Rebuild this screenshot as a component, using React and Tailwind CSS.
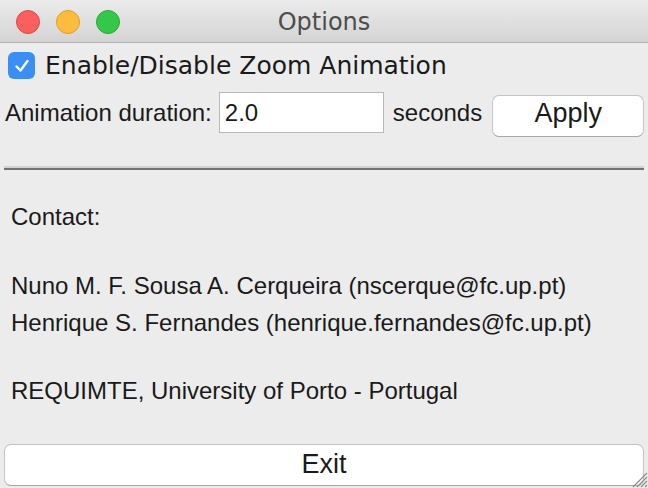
import React from "react";

export default function App() {
  const sans = { fontFamily: '"Liberation Sans", Arial, sans-serif' };
  return (
    <div className="relative flex h-[488px] w-[648px] flex-col overflow-hidden bg-[#ececec] text-[#1a1a1a]" style={sans}>
      {/* Title bar */}
      <div className="grid h-[43px] shrink-0 grid-cols-[1fr_auto_1fr] items-center border-b border-[#b3b3b3] bg-gradient-to-b from-[#ebebeb] to-[#d4d4d4] pt-[2px]">
        <div className="flex items-center gap-[16px] pl-[16px]">
          <span className="h-[24px] w-[24px] rounded-full border border-[#e2463f] bg-[#fc605c]" />
          <span className="h-[24px] w-[24px] rounded-full border border-[#e1a116] bg-[#fdbc40]" />
          <span className="h-[24px] w-[24px] rounded-full border border-[#2aa831] bg-[#34c84a]" />
        </div>
        <div className="text-[24px] text-[#4d4d4d]" style={{ fontFamily: '"DejaVu Sans", sans-serif' }}>Options</div>
        <div />
      </div>

      {/* Checkbox row */}
      <div className="mt-[9px] flex items-center pl-[8px]">
        <span className="flex h-[27px] w-[27px] items-center justify-center rounded-[6px] bg-[#3b8ef6]">
          <svg width="18" height="18" viewBox="0 0 18 18" fill="none">
            <path d="M3.5 9.5 L7.5 13.5 L14.5 4" stroke="white" strokeWidth="2.4" strokeLinecap="round" strokeLinejoin="round" />
          </svg>
        </span>
        <span className="ml-[10px] text-[25px] leading-none" style={{ fontFamily: '"DejaVu Sans", sans-serif' }}>Enable/Disable Zoom Animation</span>
      </div>

      {/* Duration row */}
      <div className="mt-[13px] flex items-start pl-[5px]">
        <span className="mt-[7px] text-[24px] leading-[28px]">Animation duration:</span>
        <div className="ml-[7px] flex h-[41px] w-[165px] items-center border border-[#b8b8b8] bg-white pl-[5px] text-[24px]">2.0</div>
        <span className="ml-[9px] mt-[7px] text-[24px] leading-[28px]">seconds</span>
        <button className="ml-[10px] mt-[3px] flex h-[42px] w-[152px] items-center justify-center rounded-[7px] border border-[#c4c4c4] border-b-[#a6a6a6] bg-white pb-[5px] text-[27px]" style={sans}>Apply</button>
      </div>

      {/* Separator */}
      <div className="mx-[4px] mt-[29px]">
        <div className="h-[2px] bg-[#d2d2d2]" />
        <div className="h-[2px] bg-[#727272]" />
      </div>

      {/* Contact */}
      <div className="mt-[33px] pl-[11px] text-[24px] leading-[28px]">
        <div>Contact:</div>
        <div className="mt-[41px]">Nuno M. F. Sousa A. Cerqueira (nscerque@fc.up.pt)</div>
        <div className="mt-[9px]">Henrique S. Fernandes (henrique.fernandes@fc.up.pt)</div>
        <div className="mt-[40px]">REQUIMTE, University of Porto - Portugal</div>
      </div>

      <div className="flex-1" />

      {/* Exit */}
      <button className="mx-[4px] mb-[2px] flex h-[42px] items-center justify-center rounded-[7px] border border-[#c4c4c4] border-b-[#a6a6a6] bg-white pb-[2px] text-[27px]" style={sans}>Exit</button>

      {/* Resize grip */}
      <svg className="absolute bottom-0 right-0" width="20" height="20" viewBox="0 0 20 20">
        <path d="M19 5 L5 19 M19 9 L9 19 M19 13 L13 19 M19 17 L17 19" stroke="#8a8a8a" strokeWidth="1.1" />
      </svg>
    </div>
  );
}
